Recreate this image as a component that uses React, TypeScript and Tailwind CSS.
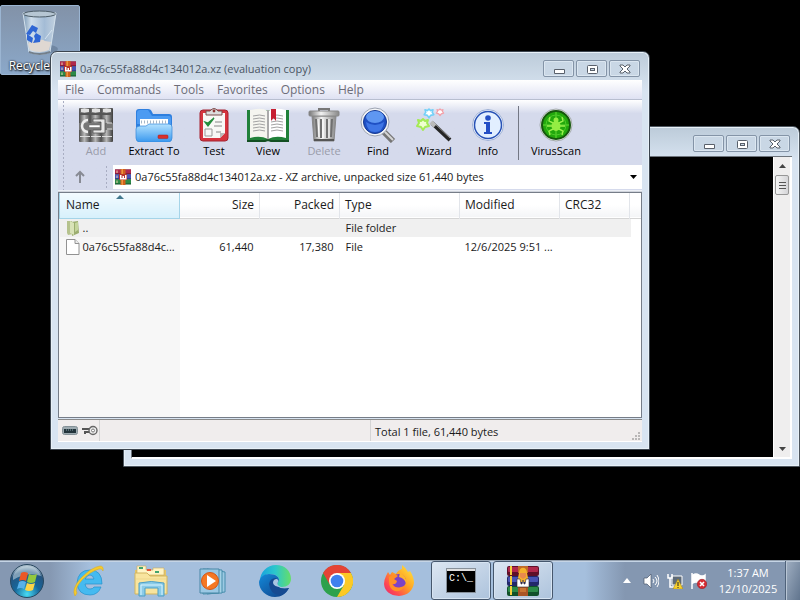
import type { ReactNode } from "react";

const BOOKS = [
  { y: 1, fill: "#b0284c", dark: "#5f1029" },
  { y: 11, fill: "#4853b4", dark: "#22286a" },
  { y: 21, fill: "#2c8a48", dark: "#11502a" },
];

function RarIcon({ className }: { className: string }) {
  return (
    <svg viewBox="0 0 32 32" className={className} aria-hidden="true">
      {BOOKS.map((b) => (
        <g key={b.y}>
          <rect x="0" y={b.y} width="32" height="10" fill={b.dark} />
          <rect x="0" y={b.y} width="32" height="8" fill={b.fill} />
          <rect x="3" y={b.y + 2} width="2" height="5" fill="#f2d9b0" />
        </g>
      ))}
      <rect x="11" y="0" width="10" height="32" fill="#d0601c" />
      <rect x="13" y="0" width="3" height="32" fill="#ee9440" />
      <path d="M8 10h16v12H8z" fill="#b8352a" />
      <path d="M10 12h3v6h2v-4h3v4h2v-6h3v9H10z" fill="#fff" />
    </svg>
  );
}

function RarTaskIcon() {
  return (
    <svg viewBox="0 0 32 32" className="size-8" aria-hidden="true">
      {BOOKS.map((b) => (
        <g key={b.y}>
          <rect x="0" y={b.y} width="32" height="10" rx="2" fill={b.dark} />
          <rect x="1" y={b.y + 1} width="30" height="5" rx="1" fill={b.fill} />
          <rect x="3" y={b.y} width="2" height="9" fill="#f4ce3b" />
        </g>
      ))}
      <rect x="11" y="21" width="10" height="10" fill="#a95525" />
      <rect x="11" y="1" width="10" height="7" fill="#c06a28" />
      <path d="M12 8c0-7 8-7 8 0l1 5-2 4h-6l-2-4z" fill="#f4b22c" />
      <path d="M13 8h6v4l-3 2-3-2z" fill="#e98a4d" />
      <path d="M10 14h3l1 5h1l1-4 1 4h1l1-5h3v8H10z" fill="#fff" stroke="#3a2c2c" strokeWidth=".6" />
      <path d="M13 23h6v4h-6z" fill="#c87433" />
    </svg>
  );
}

function AddIcon() {
  return (
    <svg viewBox="0 0 34 34" className="size-[34px]" aria-hidden="true">
      <defs>
        <linearGradient id="binder">
          <stop offset="0" stopColor="#4d4d4d" />
          <stop offset=".45" stopColor="#b9b9b9" />
          <stop offset="1" stopColor="#3c3c3c" />
        </linearGradient>
      </defs>
      {[0, 11, 22].map((x) => (
        <g key={x}>
          <rect x={x} y="0" width="12" height="34" rx="1" fill="url(#binder)" />
          <rect x={x + 2} y="1" width="8" height="3" fill="#e0e0e0" />
          <rect x={x + 1} y="5" width="10" height="2" fill="#555" />
          <rect x={x + 1} y="28" width="10" height="1" fill="#ddd" />
        </g>
      ))}
      <path d="M0 15h34v7H0z" fill="#777" />
      <path d="M9 12a5.500 5.500 0 1 0 0 12" fill="none" stroke="#ededed" strokeWidth="2.500" />
      <path d="M14 11h12v14H14v-3h8v-8h-8z" fill="#e6e6e6" stroke="#555" strokeWidth=".8" />
      <path d="M10 17h11v2.500H10z" fill="#fff" stroke="#666" strokeWidth=".5" />
      <path d="M28 15h5M28 21h5" stroke="#ddd" />
    </svg>
  );
}

function ExtractIcon() {
  return (
    <svg viewBox="0 0 38 34" className="h-[34px] w-[38px]" aria-hidden="true">
      <defs>
        <linearGradient id="folder" x2="0" y2="1">
          <stop offset="0" stopColor="#b4e2ff" />
          <stop offset="1" stopColor="#3998ee" />
        </linearGradient>
      </defs>
      <path d="M1 30V4q0-3 3-3h9q3 0 4 3l1 2h16q3 0 3 3v21z" fill="#2e7fdf" />
      <path d="M2 5q0-3 3-3h8l4 6h17q2 0 2 3v5H2z" fill="#4c9bf2" />
      <path d="M5 11h28v9H5z" fill="#fff" />
      <path d="M6 14h26" stroke="#a6b7c8" strokeWidth="3" strokeDasharray="1 2" />
      <path d="M1 21q0-3 4-3h6l3-2h20q3 0 3 3v11q0 4-4 4H5q-4 0-4-4z" fill="url(#folder)" stroke="#3487da" strokeWidth=".7" />
      <rect x="23" y="27" width="10" height="3.6" rx="1" fill="#d9312b" stroke="#a61d1d" strokeWidth=".5" />
    </svg>
  );
}

function TestIcon() {
  return (
    <svg viewBox="0 0 30 34" className="h-[34px] w-[30px]" aria-hidden="true">
      <rect x="1" y="2" width="28" height="31" rx="3" fill="#d6343e" stroke="#a52331" />
      <path d="M4 5h22v20l-5 5H4z" fill="#f8f8f6" />
      <path d="M7 7V3h4q4-5 8 0h4v4z" fill="#ddd" stroke="#7b4a4a" />
      <circle cx="15" cy="3" r="1.4" fill="#8d3333" />
      <path d="m6 14 3 4 6-8-6 5z" fill="#258d3d" stroke="#258d3d" strokeWidth="1.3" />
      <path d="M16 14h7M15 18h8M17 24h5" stroke="#888" />
      <path d="M6 21h7v7H6z" fill="none" stroke="#999" />
      <path d="m21 30 5-5h-5z" fill="#bbb" />
    </svg>
  );
}

function ViewIcon() {
  return (
    <svg viewBox="0 0 42 34" className="h-[34px] w-[42px]" aria-hidden="true">
      <path d="M0 2h42v31H0z" fill="#21813a" />
      <path d="M3 2q12-3 18 1v28q-8-4-18-1z" fill="#f5f5ef" />
      <path d="M21 3q6-4 18-1v28q-10-3-18 1z" fill="#fff" />
      <path d="M20 2h2v30h-2z" fill="#aaa" />
      <path d="M0 33h18l3-1 3 1h18" stroke="#134f22" strokeWidth="2" fill="none" />
      {[8, 11, 14, 17, 20, 23].map((y) => (
        <path key={y} d={`M6 ${y}q7-2 12 0M24 ${y}q6-2 12 0`} fill="none" stroke="#a2a2a2" />
      ))}
      <path d="M24 1h5v12l-2.500-3-2.500 3z" fill="#c62032" />
    </svg>
  );
}

function DeleteIcon() {
  return (
    <svg viewBox="0 0 32 34" className="h-[34px] w-8" aria-hidden="true">
      <defs>
        <linearGradient id="trash">
          <stop offset="0" stopColor="#777" />
          <stop offset=".4" stopColor="#f2f2f2" />
          <stop offset="1" stopColor="#888" />
        </linearGradient>
      </defs>
      <path d="M11 3V1h10v2" fill="none" stroke="#777" strokeWidth="2" />
      <path d="M4 8h24l-2 25H6z" fill="url(#trash)" stroke="#888" />
      <rect x="1" y="3" width="30" height="5" rx="1" fill="url(#trash)" stroke="#888" />
      <path d="m8 11 1 18M13 11v19M19 11v19M24 11l-1 18" stroke="#707070" strokeWidth="2" />
      <path d="m10 11 1 18M15 11v19M21 11v19" stroke="#fff" />
      <path d="M6 32h20" stroke="#555" strokeWidth="2" />
    </svg>
  );
}

function FindIcon() {
  return (
    <svg viewBox="0 0 36 36" className="size-9" aria-hidden="true">
      <path d="m23 24 10 10" stroke="#757575" strokeWidth="6" />
      <path d="m24 24 9 9" stroke="#d5d5d5" strokeWidth="2" />
      <circle cx="15" cy="15" r="14" fill="#f4f5f7" stroke="#9da4b2" />
      <circle cx="15" cy="15" r="11.500" fill="#1f50c4" stroke="#153890" />
      <ellipse cx="15" cy="10" rx="9" ry="6" fill="#5f97f2" />
      <path d="M6 15q9 6 18 0-1 10-9 10T6 15" fill="#3f76e6" />
    </svg>
  );
}

function WizardIcon() {
  const star = "m0-5 2 2 3-1-1 3 2 3-4 1-2 3-2-3-4-1 2-3-1-3 3 1z";
  return (
    <svg viewBox="0 0 36 36" className="size-9" aria-hidden="true">
      <g strokeWidth="2" strokeLinejoin="round">
        <path transform="translate(7 17)" d={star} stroke="#a4ea55" fill="#efffcf" />
        <path transform="translate(13 6) scale(.8)" d={star} stroke="#72d0f8" fill="#fff" />
        <path transform="translate(24 5) scale(.6)" d={star} stroke="#f3a0a8" fill="#fff" />
      </g>
      <path d="m16 16 18 17" stroke="#252525" strokeWidth="4" />
      <path d="m17 15 17 16" stroke="#999" />
      <path d="m15 15 4 4" stroke="#bbb" strokeWidth="4" />
    </svg>
  );
}

function InfoIcon() {
  return (
    <svg viewBox="0 0 34 34" className="size-[34px]" aria-hidden="true">
      <circle cx="17" cy="17" r="15.500" fill="#f6faff" stroke="#9eb0d5" />
      <circle cx="17" cy="17" r="13.500" fill="#e2efff" stroke="#2852b6" strokeWidth="1.500" />
      <circle cx="17" cy="10" r="2.800" fill="#244fc5" />
      <path d="M13 14h6v10h2v2h-8v-2h2v-8h-2z" fill="#244fc5" />
    </svg>
  );
}

function VirusIcon() {
  return (
    <svg viewBox="0 0 34 34" className="size-[34px]" aria-hidden="true">
      <circle cx="17" cy="17" r="16" fill="#e8eee8" stroke="#888f90" strokeWidth=".7" />
      <circle cx="17" cy="17" r="14" fill="#22a80c" stroke="#16570e" strokeWidth="2" />
      <path d="M17 4v26M4 17h26" stroke="#63d835" />
      <circle cx="17" cy="17" r="10" fill="none" stroke="#4cc929" />
      <g stroke="#9bf04e" strokeWidth="1.400" fill="none">
        <path d="m14 15-4-2 1-4M20 15l4-2-1-4M13 18H8M21 18h5M14 21l-4 2 1 4M20 21l4 2-1 4" />
      </g>
      <ellipse cx="17" cy="18" rx="4.500" ry="5" fill="#94ed43" />
      <circle cx="17" cy="12" r="2.500" fill="#94ed43" />
    </svg>
  );
}

function RecycleBin() {
  return (
    <svg viewBox="0 0 38 46" className="mt-1 h-[46px] w-[38px]" aria-hidden="true">
      <defs>
        <linearGradient id="glass">
          <stop offset="0" stopColor="#7797b4" />
          <stop offset=".25" stopColor="#dceaf5" />
          <stop offset=".65" stopColor="#a9c2dc" />
          <stop offset="1" stopColor="#cddbe7" />
        </linearGradient>
      </defs>
      <ellipse cx="27" cy="39" rx="10" ry="4" fill="#576d87" opacity=".5" />
      <path d="M2 3h33l-6 39q-10 5-21 0z" fill="url(#glass)" fillOpacity=".85" stroke="#d4e2ed" />
      <ellipse cx="18.500" cy="4" rx="16" ry="3" fill="#b6c6d3" stroke="#4d5d68" />
      <path d="M7 34q3-5 8-2 5-4 9-1l6 1-2 8q-9 4-19 0z" fill="#dfd8d2" />
      <path d="M8 41q10 4 21 0v2q-10 4-21 0z" fill="#737f8b" />
      <path d="m7 21 4-6 6 3-2 5-3-2-3 4-4-1zM6 24l6 4-1 5-5-3zM15 23l5 3-1 6-7 1 2-4-1-3z" fill="#2f66d4" />
      <path d="m31 20-7 9" stroke="#e9f3fb" opacity=".7" />
    </svg>
  );
}

function FileTypeIcon({ folder }: { folder?: boolean }) {
  return folder ? (
    <svg viewBox="0 0 14 16" className="h-4 w-[14px] shrink-0" aria-hidden="true">
      <path d="M1 1h5l1 13-5 1-1-2z" fill="#b5c28d" />
      <path d="m5 2 7-1 1 12-7 3z" fill="#9cae70" />
      <path d="m4 1 4 2v12l-4-2z" fill="#d9e3b8" />
      <path d="m9 3 3-1v8l-3 2z" fill="#c5d59d" />
    </svg>
  ) : (
    <svg viewBox="0 0 14 16" className="h-4 w-[14px] shrink-0" aria-hidden="true">
      <path d="M.5.5H9l4 4v11H.5z" fill="#fff" stroke="#929292" />
      <path d="M9 .5v4h4" fill="#eee" stroke="#929292" />
    </svg>
  );
}

const CAPTIONS = [
  { name: "Minimize", glyph: <path d="M4.500 8.500h10v4h-10z" fill="#fff" stroke="#59606b" /> },
  {
    name: "Maximize",
    glyph: (
      <>
        <rect x="4.500" y="4.500" width="10" height="8" rx="1" fill="#fff" stroke="#59606b" />
        <rect x="7.500" y="7.500" width="4" height="2" fill="#c9d8e6" stroke="#59606b" />
      </>
    ),
  },
  {
    name: "Close",
    glyph: <path d="M4 4h3l2 2 2-2h3v1l-3 3 3 3v1h-3l-2-2-2 2H4v-1l3-3-3-3z" fill="#fff" stroke="#59606b" />,
  },
];

function CaptionButtons() {
  return (
    <div className="flex gap-[2px] pt-2 pr-0.5">
      {CAPTIONS.map((c) => (
        <button key={c.name} aria-label={c.name} className="flex h-[17px] w-[31px] items-center justify-center rounded-[2px] border border-[#8494a7] bg-[#c9d7e5] shadow-[inset_0_0_0_1px_#dbe6f0]">
          <svg viewBox="0 0 18 16" className="h-4 w-[18px]" aria-hidden="true">{c.glyph}</svg>
        </button>
      ))}
    </div>
  );
}

const MENU = ["File", "Commands", "Tools", "Favorites", "Options", "Help"];

function Tool({ label, icon, width, disabled }: { label: string; icon: ReactNode; width: string; disabled?: boolean }) {
  return (
    <button disabled={disabled} className={`flex flex-col items-center text-black disabled:text-[#9a9caa] ${width}`}>
      <span className="flex h-9 items-center">{icon}</span>
      <span className="leading-4">{label}</span>
    </button>
  );
}

const FILES = [
  { name: "..", size: "", packed: "", type: "File folder", modified: "", folder: true },
  { name: "0a76c55fa88d4c...", size: "61,440", packed: "17,380", type: "File", modified: "12/6/2025 9:51 ...", folder: false },
];

const HEAD = "border-r border-[#e2e5ea] px-[5px] font-normal";

function FileTable() {
  return (
    <div className="flex-1 border border-[#767d88] bg-white bg-[linear-gradient(to_right,#f7f7f7_121px,white_121px)]">
      <table className="w-full table-fixed border-collapse text-left">
        <colgroup>
          <col className="w-[120px]" />
          <col className="w-20" />
          <col className="w-20" />
          <col className="w-[120px]" />
          <col className="w-[100px]" />
          <col className="w-[70px]" />
          <col />
        </colgroup>
        <thead className="text-[12px]">
          <tr className="h-[25px] border-b border-[#d5d5d5] bg-linear-to-b from-white from-50% to-[#f4f5f7]">
            <th className="relative border border-t-0 border-[#a5d4e8] bg-linear-to-b from-[#f3fbff] to-[#d7f0fb] px-[6px] font-normal">
              Name
              <svg viewBox="0 0 8 4" className="absolute top-0.5 left-14 h-1 w-2" aria-hidden="true"><path d="M0 4l4-4 4 4z" fill="#43798e" /></svg>
            </th>
            <th className={`text-right ${HEAD}`}>Size</th>
            <th className={`text-right ${HEAD}`}>Packed</th>
            <th className={HEAD}>Type</th>
            <th className={HEAD}>Modified</th>
            <th className={HEAD}>CRC32</th>
            <td />
          </tr>
        </thead>
        <tbody>
          {FILES.map((f) => (
            <tr key={f.name} className="h-[19px] first:bg-[linear-gradient(to_right,#f0f0f0_571px,transparent_571px)]">
              <td className="pl-[6px]">
                <div className="flex items-center gap-[3px]">
                  <FileTypeIcon folder={f.folder} />
                  <span>{f.name}</span>
                </div>
              </td>
              <td className="pr-[6px] text-right">{f.size}</td>
              <td className="pr-[6px] text-right">{f.packed}</td>
              <td className="pl-[6px]">{f.type}</td>
              <td className="pl-[5px] whitespace-nowrap">{f.modified}</td>
              <td />
              <td />
            </tr>
          ))}
        </tbody>
      </table>
    </div>
  );
}

const GRIP = "w-[3px] self-stretch bg-[radial-gradient(circle,#a8adc2_1px,transparent_1px)] bg-[size:3px_4px]";

function ArchiveWindow() {
  return (
    <section className="absolute top-[51px] left-[50px] flex h-[399px] w-[600px] flex-col rounded-t-[7px] border border-[#3c454f] bg-linear-to-b from-[#bccbd9] to-[#d8e4f1] to-10% px-[7px] pb-[7px] shadow-[inset_0_0_0_1px_#e8f1f8]">
      <header className="flex h-7 justify-between">
        <h1 className="flex items-center gap-1 pt-1.5 pl-0.5 text-[#4a5563]">
          <RarIcon className="size-4" />
          0a76c55fa88d4c134012a.xz (evaluation copy)
        </h1>
        <CaptionButtons />
      </header>
      <nav className="flex h-5 items-center gap-[13px] border-b border-[#b8bed0] bg-linear-to-b from-white to-[#dfe2f3] pl-[7px] text-[12px] text-[#6d6d78]">
        {MENU.map((m) => <button key={m}>{m}</button>)}
      </nav>
      <div className="flex bg-linear-to-b from-white to-[#d5daec] to-15% pl-1">
        <div className={GRIP} />
        <div className="flex min-w-0 flex-1 flex-col">
          <div className="flex h-[65px] items-center pl-[5px]">
            <Tool label="Add" icon={<AddIcon />} width="w-[52px]" disabled />
            <Tool label="Extract To" icon={<ExtractIcon />} width="w-16" />
            <Tool label="Test" icon={<TestIcon />} width="w-14" />
            <Tool label="View" icon={<ViewIcon />} width="w-[52px]" />
            <Tool label="Delete" icon={<DeleteIcon />} width="w-[60px]" disabled />
            <Tool label="Find" icon={<FindIcon />} width="w-12" />
            <Tool label="Wizard" icon={<WizardIcon />} width="w-16" />
            <Tool label="Info" icon={<InfoIcon />} width="w-11" />
            <div className="ml-2 h-[54px] w-px bg-[#737784]" />
            <Tool label="VirusScan" icon={<VirusIcon />} width="w-[74px]" />
          </div>
          <div className="flex h-[25px] items-stretch pb-px">
            <button aria-label="Up one level" className="flex w-[30px] items-center justify-center">
              <svg viewBox="0 0 12 14" className="h-[14px] w-3" aria-hidden="true"><path d="M6 13V2M2 6l4-4 4 4" fill="none" stroke="#888b94" strokeWidth="2" /></svg>
            </button>
            <div className="w-2.5" />
            <div className={GRIP} />
            <div className="ml-[5px] flex flex-1 items-center gap-1 bg-white pl-[2px]">
              <RarIcon className="size-4" />
              <div className="relative flex-1">
                <select aria-label="Archive path" className="w-full appearance-none bg-white leading-4 outline-none">
                  <option>0a76c55fa88d4c134012a.xz - XZ archive, unpacked size 61,440 bytes</option>
                </select>
                <svg viewBox="0 0 7 4" className="pointer-events-none absolute top-1.5 right-[5px] h-1 w-[7px]" aria-hidden="true"><path d="M0 0h7L3.500 4z" /></svg>
              </div>
            </div>
          </div>
        </div>
      </div>
      <div className="h-0.5 border-b border-[#d0d4dc] bg-[#edf0f6]" />
      <FileTable />
      <footer className="mt-px flex h-[23px] border-t border-[#898989] border-b border-b-white bg-[#f0eded]">
        <div className="flex w-[42px] items-center gap-1 border-r border-[#d4d4d4] pl-1">
          <svg viewBox="0 0 16 9" className="h-[9px] w-4" aria-hidden="true"><rect x=".5" y=".5" width="15" height="8" rx="2" fill="#9daab0" stroke="#849197" /><path d="M2 3h12v4H2z" fill="#22343b" /><path d="M4 4h8" stroke="#8ba3ad" strokeDasharray="1 1" /></svg>
          <svg viewBox="0 0 16 11" className="h-[11px] w-4" aria-hidden="true"><path d="M7 4H0M7 7H3v2" fill="none" stroke="#555" strokeWidth="2" /><circle cx="11" cy="5.500" r="4" fill="#eee" stroke="#666" strokeWidth="1.400" /><circle cx="11" cy="5.500" r="1.500" fill="#fff" stroke="#777" /></svg>
        </div>
        <div className="flex-1 border-r border-[#d4d4d4]" />
        <div className="flex w-[271px] items-center justify-between pl-1">
          <span className="pt-0.5">Total 1 file, 61,440 bytes</span>
          <svg viewBox="0 0 10 10" className="size-[10px] self-end" aria-hidden="true"><path d="M6 1h2v2H6zM3 4h2v2H3zM6 4h2v2H6zM0 7h2v2H0zM3 7h2v2H3zM6 7h2v2H6z" fill="#b9b7b7" /></svg>
        </div>
      </footer>
    </section>
  );
}

function ConsoleWindow() {
  return (
    <section aria-label="Console" className="absolute top-[126px] left-[123px] flex h-[341px] w-[677px] flex-col rounded-t-[7px] border border-[#4d565f] bg-linear-to-b from-[#bccbd9] to-[#d8e4f1] to-10% px-[7px] pb-[7px] shadow-[inset_0_0_0_1px_#e8f1f8]">
      <header className="flex h-[29px] justify-end"><CaptionButtons /></header>
      <div className="flex flex-1 border border-[#6d747c] border-r-0 border-b-2 border-b-white bg-black">
        <div className="flex-1" />
        <div className="flex w-[19px] flex-col items-center border-r-2 border-l border-white bg-[#efeeee]">
          <button aria-label="Scroll up" className="flex h-[18px] items-center">
            <svg viewBox="0 0 7 4" className="h-1 w-[7px]" aria-hidden="true"><path d="M0 4l3.500-4L7 4z" fill="#444" /></svg>
          </button>
          <div className="flex h-5 w-[14px] flex-col items-center justify-center gap-[2px] rounded-[2px] border border-[#979797] bg-linear-to-r from-[#f5f5f5] to-[#d5d5d8]">
            <i className="h-px w-[7px] bg-[#555]" /><i className="h-px w-[7px] bg-[#555]" /><i className="h-px w-[7px] bg-[#555]" />
          </div>
          <button aria-label="Scroll down" className="mt-auto flex h-[17px] items-center">
            <svg viewBox="0 0 7 4" className="h-1 w-[7px]" aria-hidden="true"><path d="M0 0h7L3.500 4z" fill="#444" /></svg>
          </button>
        </div>
      </div>
    </section>
  );
}

function StartIcon() {
  return (
    <svg viewBox="0 0 36 36" className="size-9" aria-hidden="true">
      <defs>
        <radialGradient id="orb" cx=".5" cy=".9" r=".85"><stop offset="0" stopColor="#48dcf4" /><stop offset=".45" stopColor="#17669a" /><stop offset=".8" stopColor="#25547f" /><stop offset="1" stopColor="#a9bdcb" /></radialGradient>
      </defs>
      <circle cx="18" cy="18" r="16.500" fill="url(#orb)" stroke="#284860" />
      <path d="M4 13q4-10 14-10t14 10q-14-5-28 4z" fill="#d8e7ee" opacity=".5" />
      <path d="M12 10q3-2 7 0l-2 8q-3-2-7 0z" fill="#eb5826" />
      <path d="M20 11q4 2 8 0l-2 8q-4 2-8 0z" fill="#93c83e" />
      <path d="M10 19q3-2 7 0l-2 7q-3-2-7 0z" fill="#58b1ea" />
      <path d="M18 20q4 2 8 0l-2 7q-4 2-8 0z" fill="#fdd447" />
    </svg>
  );
}

function IeIcon() {
  return (
    <svg viewBox="0 0 32 32" className="size-8" aria-hidden="true">
      <path d="M29 19H12q1 5 5 5 3 0 4-2h7q-3 8-11 8Q5 30 4 18 5 5 17 5q12 0 12 14M12 14h9q-1-4-4-4t-5 4" fill="#45baf0" stroke="#2490cc" strokeWidth=".7" fillRule="evenodd" />
      <path d="M2 31Q-2 24 8 13 19 2 27 1q4 0 3 5-1-3-4-2Q18 6 9 15 1 24 4 28z" fill="#f5cb2d" stroke="#d8a81c" strokeWidth=".5" />
    </svg>
  );
}

function ExplorerIcon() {
  return (
    <svg viewBox="0 0 34 32" className="h-8 w-[34px]" aria-hidden="true">
      <path d="M1 5h31v22H1z" fill="#e4c568" />
      <path d="M3 4V1h9v4h7V3h11v7H3z" fill="#fff4c4" stroke="#c6aa5b" strokeWidth=".6" />
      <path d="M5 2h4v2H5zM21 6h4v2h-4z" fill="#42a36e" />
      <path d="M13 4h4v2h-4z" fill="#e55337" />
      <path d="M1 8h12l3 3h17v18H1z" fill="#f8e49e" stroke="#d1b560" />
      <path d="M2 14h30" stroke="#eed78c" />
      <path d="M5 18q12-3 25 0v13h-6v-8H11v8H5z" fill="#8acbe8" stroke="#4d9fc5" />
      <path d="M7 20h21M7 20v10M28 20v10" stroke="#d9f4ff" fill="none" />
    </svg>
  );
}

function PlayerIcon() {
  return (
    <svg viewBox="0 0 28 28" className="size-7" aria-hidden="true">
      <path d="m8 2 18 3v20L8 27z" fill="#9cc9e3" stroke="#468ead" />
      <path d="m4 2 19 1v23L4 27z" fill="#a6d3e7" stroke="#478dac" />
      <path d="M1 2h19v24H1z" fill="#9ac8e4" stroke="#4987a6" />
      <circle cx="11" cy="14" r="8.500" fill="#f57823" stroke="#d55716" />
      <path d="m8 8 9 6-9 6z" fill="#fff" />
    </svg>
  );
}

function EdgeIcon() {
  return (
    <svg viewBox="0 0 32 32" className="size-8" aria-hidden="true">
      <defs>
        <linearGradient id="edge"><stop stopColor="#17a2df" /><stop offset=".5" stopColor="#2cc7cb" /><stop offset="1" stopColor="#66de68" /></linearGradient>
        <linearGradient id="edgeb" x2="1" y2="1"><stop stopColor="#1389d9" /><stop offset="1" stopColor="#103d83" /></linearGradient>
      </defs>
      <path d="M1 16C1 7 8 0 17 0s15 6 15 14c0 5-4 8-9 8-4 0-5-1-5-3l2-4c0-3-3-6-9-6-5 0-8 3-10 7" fill="url(#edge)" />
      <path d="M0 17c1-5 5-8 10-8 7 0 10 3 10 6l-2 4c0 3 4 6 12 4-3 6-8 9-14 9C7 32 0 25 0 17" fill="url(#edgeb)" />
      <path d="M10 19q1-6 7-6l2 3-1 3q1 6 12 4-4 7-10 7-9-1-10-11" fill="#164a91" />
      <path d="M14 18q0-4 4-4 2 1 1 3-2 3 3 5-7 0-8-4" fill="#a9c6e3" />
    </svg>
  );
}

function ChromeIcon() {
  return (
    <svg viewBox="0 0 32 32" className="size-8" aria-hidden="true">
      <circle cx="16" cy="16" r="16" fill="#2da14d" />
      <path d="M2.100 8a16 16 0 0 1 27.800 0H16L9 20z" fill="#e54335" />
      <path d="M16 8h13.900A16 16 0 0 1 16 32l7-12z" fill="#fcc925" />
      <circle cx="16" cy="16" r="8" fill="#fff" />
      <circle cx="16" cy="16" r="6.300" fill="#3f80ee" />
    </svg>
  );
}

function FirefoxIcon() {
  return (
    <svg viewBox="0 0 32 32" className="size-8" aria-hidden="true">
      <defs><linearGradient id="fox" x1="1" x2="0" y2="1"><stop stopColor="#fff044" /><stop offset=".45" stopColor="#ffa022" /><stop offset=".75" stopColor="#ff4a50" /><stop offset="1" stopColor="#e12176" /></linearGradient></defs>
      <path d="M3 11l2-4 2 3 2-3 4 2q2-4 6-5V0q4 3 6 7l2-1q4 6 4 12-2 12-15 13Q2 30 1 19q0-4 2-8" fill="url(#fox)" />
      <circle cx="16" cy="16" r="7" fill="#7c42c6" />
      <path d="M6 12q6-4 9-1l-4 3 3 2q-1 4-5 3 3 5 9 3l4-1q-3 6-10 5Q6 24 6 16z" fill="#ff9026" />
      <path d="M17 8q7 3 6 10-2-5-7-6z" fill="#ffb52c" />
    </svg>
  );
}

function TerminalIcon() {
  return (
    <span className="flex h-[25px] w-[30px] flex-col border border-[#87909a] bg-black">
      <i className="h-0.5 bg-[#dfdfdf]" />
      <span className="pt-[3px] text-center font-['Liberation_Mono'] text-[10px] leading-[10px] text-white">C:\_</span>
    </span>
  );
}

const PINNED = [
  { name: "Internet Explorer", icon: <IeIcon /> },
  { name: "Windows Explorer", icon: <ExplorerIcon /> },
  { name: "Media Player", icon: <PlayerIcon /> },
  { name: "Microsoft Edge", icon: <EdgeIcon /> },
  { name: "Google Chrome", icon: <ChromeIcon /> },
  { name: "Firefox", icon: <FirefoxIcon /> },
];

const RUNNING = "flex h-[39px] w-[60px] items-center justify-center rounded-[3px] border border-[#46576d] bg-linear-to-br from-[#dce6f2] to-[#adc3dc] shadow-[inset_0_0_0_1px_#d7e4f2]";

function Taskbar() {
  return (
    <footer className="relative flex h-10 items-stretch border-t border-[#93a0af] bg-[linear-gradient(to_right,#8598b2_0,#8598b2_50px,#a5bfdd_90px,#a5bfdd_calc(100%-215px),#8497b1_calc(100%-175px),#8497b1_100%)] shadow-[inset_0_1px_0_#c5d4e5]">
      <button aria-label="Start" className="flex w-[54px] items-center justify-center"><StartIcon /></button>
      <div className="flex pl-1">
        {PINNED.map((p) => <button key={p.name} aria-label={p.name} className="flex w-[62px] items-center justify-center">{p.icon}</button>)}
      </div>
      <div className="flex gap-0.5 pl-px">
        <button aria-label="Command Prompt" className={RUNNING}><TerminalIcon /></button>
        <button aria-label="WinRAR" className={RUNNING}><RarTaskIcon /></button>
      </div>
      <div className="ml-auto flex items-center text-white">
        <button aria-label="Show hidden icons" className="flex w-6 justify-center">
          <svg viewBox="0 0 8 5" className="h-[5px] w-2" aria-hidden="true"><path d="M0 5l4-5 4 5z" fill="#fff" /></svg>
        </button>
        <button aria-label="Volume" className="flex w-6 justify-center">
          <svg viewBox="0 0 16 16" className="size-4" aria-hidden="true"><path d="M1 5h3l4-4v14l-4-4H1z" fill="#fff" stroke="#48566b" strokeWidth=".7" /><path d="M10 6q2 2 0 4M12 4q4 4 0 8M14 2q4 6 0 12" fill="none" stroke="#fff" /></svg>
        </button>
        <button aria-label="Network" className="flex w-6 justify-center">
          <svg viewBox="0 0 16 16" className="size-4" aria-hidden="true"><path d="M5 3h10v9H5z" fill="#5e6b79" stroke="#fff" /><path d="M1 1v4h4V1M3 5v9h6" fill="none" stroke="#fff" strokeWidth="1.500" /><path d="m11 6 5 10H6z" fill="#f8d12d" stroke="#9b7b16" strokeWidth=".5" /><path d="M11 9v4M11 14v1" stroke="#222" /></svg>
        </button>
        <button aria-label="Action Center" className="flex w-6 justify-center">
          <svg viewBox="0 0 16 16" className="size-4" aria-hidden="true"><path d="M1 0v16M2 2q3-2 6 0t6 0v8q-3 2-6 0t-6 0z" fill="#fff" stroke="#fff" strokeWidth="1.500" /><circle cx="11" cy="11" r="4.700" fill="#d62a31" stroke="#951d26" strokeWidth=".6" /><path d="m9 9 4 4m0-4-4 4" stroke="#fff" strokeWidth="1.600" /></svg>
        </button>
        <time className="flex w-[74px] flex-col text-center leading-4" dateTime="2025-12-10T01:37"><span>1:37 AM</span><span>12/10/2025</span></time>
        <button aria-label="Show desktop" className="h-full w-[15px] border-l border-[#4f627a] bg-linear-to-br from-[#a0afc2] to-[#61758e] shadow-[inset_1px_1px_0_#b9c6d5]" />
      </div>
    </footer>
  );
}

export default function App() {
  return (
    <div className="flex h-screen flex-col overflow-hidden bg-black font-['Open_Sans','Noto_Sans',sans-serif] text-[11px] leading-4 text-[#1a1a1a]">
      <main className="relative flex-1">
        <button className="absolute top-[5px] left-0 flex h-[70px] w-20 flex-col items-center rounded-[2px] border border-[#9bb5d2] bg-linear-to-b from-[#8292a8] to-[#8ba8c9] text-[12px] whitespace-nowrap text-white">
          <RecycleBin />
          <span className="mt-0.5 [text-shadow:1px_1px_2px_#000,0_0_2px_#000]">Recycle Bin</span>
        </button>
        <ConsoleWindow />
        <ArchiveWindow />
      </main>
      <Taskbar />
    </div>
  );
}
